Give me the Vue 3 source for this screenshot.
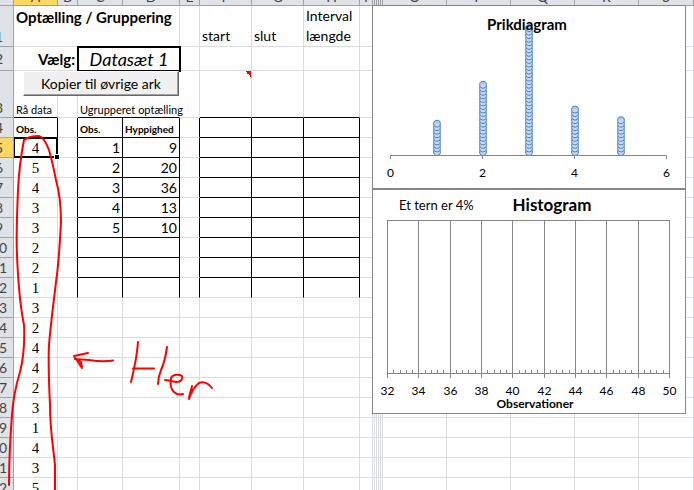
<script setup>
const observations = [4, 5, 4, 3, 3, 2, 2, 1, 3, 2, 4, 4, 2, 3, 1, 4, 3, 5]
const counts = [9, 20, 36, 13, 10]
const letters = 'ABCDEFGHIJKLMNOPQRS'.split('')
const narrow = 'JKLMN'.split('')
const tail = 'JKLMNOPQRS'.split('')

const rows = observations.map((obs, i) => ({
  n: i + 5,
  obs,
  value: i < counts.length ? i + 1 : '',
  count: i < counts.length ? counts[i] : '',
  framed: i < 8,
  ruled: i < 7,
}))

const dots = counts.flatMap((count, i) =>
  Array.from({ length: count }, (_, k) => ({ x: 65 + i * 46, y: 147 - k * 3.54 }))
)
const dotLabels = [0, 2, 4, 6].map((v) => ({ v, x: 18.5 + v * 46 }))
const bins = Array.from({ length: 10 }, (_, i) => ({
  v: 32 + i * 2,
  x: Math.round(15 + i * 31.33) + 0.5,
}))
const minor = Array.from({ length: 45 }, (_, i) => Math.round(15 + i * 6.266) + 0.5)
</script>

<template>
  <main class="window">
    <div class="sheet">
      <table class="grid">
        <colgroup>
          <col class="w-head" /><col class="w-a" /><col class="w-gap" /><col class="w-c" />
          <col class="w-d" /><col class="w-gap" /><col class="w-f" /><col class="w-f" />
          <col class="w-h" /><col class="w-i" />
          <col v-for="c in narrow" :key="c" class="w-narrow" />
          <col class="w-wide" /><col class="w-wide" /><col class="w-wide" /><col class="w-wide" /><col />
        </colgroup>
        <thead>
          <tr class="letters">
            <th></th>
            <th v-for="c in letters" :key="c" :class="{ current: c === 'A' }">
              <div class="letter">{{ narrow.includes(c) ? '' : c }}</div>
            </th>
          </tr>
        </thead>
        <tbody>
          <tr class="r1">
            <th class="low">1</th>
            <td colspan="4" class="title"><div class="spill">Optælling / Gruppering</div></td>
            <td></td>
            <td class="low label">start</td>
            <td class="low label">slut</td>
            <td class="low label tall">Interval længde</td>
            <td></td>
            <td v-for="c in tail" :key="c"></td>
          </tr>
          <tr class="r2">
            <th>2</th>
            <td colspan="2" class="choose">Vælg:</td>
            <td colspan="2" class="dataset">Datasæt 1</td>
            <td></td><td></td><td></td><td></td><td></td>
            <td v-for="c in tail" :key="c"></td>
          </tr>
          <tr class="r3">
            <th class="low">3</th>
            <td class="low small line-below">Rå data</td>
            <td></td>
            <td colspan="2" class="low small line-below open"><div class="spill">Ugrupperet optælling</div></td>
            <td></td>
            <td class="line-below note"></td>
            <td class="line-below"></td>
            <td class="line-below"></td>
            <td></td>
            <td v-for="c in tail" :key="c"></td>
          </tr>
          <tr>
            <th>4</th>
            <td class="caption line-below line-right">Obs.</td>
            <td class="line-right"></td>
            <td class="caption line-below line-right">Obs.</td>
            <td class="caption line-below line-right">Hyppighed</td>
            <td class="line-right"></td>
            <td v-for="k in 3" :key="k" class="line-below line-right"></td>
            <td></td>
            <td v-for="c in tail" :key="c"></td>
          </tr>
          <tr v-for="row in rows" :key="row.n">
            <th :class="{ current: row.n === 5 }">{{ row.n }}</th>
            <td class="obs" :class="{ selected: row.n === 5 }">{{ row.obs }}</td>
            <td :class="{ 'line-right': row.framed }"></td>
            <td class="num" :class="{ 'line-right': row.framed, 'line-below': row.ruled }">{{ row.value }}</td>
            <td class="num" :class="{ 'line-right': row.framed, 'line-below': row.ruled }">{{ row.count }}</td>
            <td :class="{ 'line-right': row.framed }"></td>
            <td v-for="k in 3" :key="k" :class="{ 'line-right': row.framed, 'line-below': row.ruled }"></td>
            <td></td>
            <td v-for="c in tail" :key="c"></td>
          </tr>
        </tbody>
      </table>

      <button type="button" class="copy">Kopier til øvrige ark</button>

      <div class="charts">
        <svg class="chart" width="314" height="184" viewBox="0 0 314 184" role="img" aria-label="Prikdiagram">
          <defs>
            <linearGradient id="dot" x1="0" y1="0" x2="0" y2="1">
              <stop offset="0" stop-color="#a3bde6" />
              <stop offset="1" stop-color="#d6e2f5" />
            </linearGradient>
          </defs>
          <rect x="0.5" y="0.5" width="313" height="183" class="frame" />
          <path d="M18.5 154V150.500H294.500V154M110.500 150V154M202.500 150V154" class="axis" />
          <circle v-for="(d, i) in dots" :key="i" :cx="d.x" :cy="d.y" r="3.500" class="dot" />
          <text x="155" y="25" class="t-mid">Prikdiagram</text>
          <text v-for="l in dotLabels" :key="l.v" :x="l.x" y="172" class="t-axis">{{ l.v }}</text>
        </svg>
        <svg class="chart" width="314" height="225" viewBox="0 0 314 225" role="img" aria-label="Histogram">
          <rect x="0.5" y="0.5" width="313" height="224" class="frame" />
          <text x="27" y="21" class="t-note">Et tern er 4%</text>
          <text x="180" y="22" class="t-big">Histogram</text>
          <path d="M15.500 31.500H297.500M15.500 184.500H297.500" class="axis" />
          <path v-for="b in bins" :key="b.v" :d="`M${b.x} 31V189`" class="axis" />
          <path v-for="m in minor" :key="m" :d="`M${m} 181V184`" class="axis" />
          <text v-for="b in bins" :key="b.v" :x="b.x" y="206" class="t-axis">{{ b.v }}</text>
          <text x="163" y="219" class="t-sub">Observationer</text>
        </svg>
      </div>

      <svg class="ink" width="240" height="490" viewBox="0 0 240 490" aria-hidden="true">
        <path d="M24 140C28 137 33 136 39 136C43 137 46 142 49 150C52 160 54 170 56 180C60 194 61 208 61 222C60 240 59 262 56 282C54 300 51 320 49 345C48 365 49 385 50 405C50 430 53 445 55 465V490" />
        <path d="M24 140C21 155 19 170 18 190C17 215 16 235 17 255C18 280 20 305 24 325C25 345 23 360 20 372C16 385 13 400 12 415C10 440 9 460 9 485" />
        <path d="M113 360.500C105 362 95 361 89 360L75 359M88 353L74 356L82 368L76 359L81 362L82 367" />
        <path d="M138 342C137 356 134 370 131 382M133 368.500H154M167 347C165 361 163 366 161 370C159 375 158 380 158 384" />
        <path d="M165 380C169 380 173 382 177 382C181 382 183 379 182 376C179 374 173 374 171 378C170 383 171 389 174 392C177 395 180 395 183 394" />
        <path d="M192 386C191 391 189 395 189 399C191 393 195 386 199 383C204 381 208 383 212 388" />
      </svg>
    </div>
  </main>
</template>

<style>
body {
  margin: 0;
  background: #fff;
}
</style>

<style scoped>
.window {
  height: 100vh;
  overflow: hidden;
  font-family: Lato, "Liberation Sans", sans-serif;
  color: #000;
}
.sheet {
  position: relative;
  margin-left: -15px;
}
.grid {
  width: 100%;
  table-layout: fixed;
  border-collapse: separate;
  border-spacing: 0;
}
.w-head { width: 29px; }
.w-a { width: 44px; }
.w-gap { width: 20px; }
.w-c { width: 45px; }
.w-d { width: 57px; }
.w-f { width: 52px; }
.w-h { width: 56px; }
.w-i { width: 13px; }
.w-narrow { width: 2px; }
.w-wide { width: 64px; }

tr { height: 20px; }
.letters { height: 6px; }
.r1 { height: 41px; }
.r2 { height: 24px; }
.r3 { height: 47px; }

th,
td {
  box-sizing: border-box;
  padding: 0;
  border-right: 1px solid #dadcdd;
  border-bottom: 1px solid #dadcdd;
  font-size: 14px;
  line-height: 18px;
  white-space: nowrap;
}
th {
  background: #dfe3e8;
  border-color: #9ea3aa;
  color: #444;
  font-size: 14px;
  font-weight: 400;
  text-align: center;
}
th.current {
  background: #ffd863;
  border-color: #c99d3c;
}
.letter {
  display: flex;
  align-items: flex-end;
  justify-content: center;
  height: 5px;
  line-height: 16px;
  overflow: hidden;
}
.low { vertical-align: bottom; }
.spill {
  width: 0;
  overflow: visible;
}
.title {
  padding-left: 2px;
  vertical-align: top;
  font-size: 15px;
  font-weight: 700;
  line-height: 22px;
}
.label {
  padding-left: 2px;
  line-height: 20px;
}
.tall { white-space: normal; }
.choose {
  border-right: 0;
  padding-right: 3px;
  font-size: 15px;
  font-weight: 700;
  text-align: right;
}
.dataset {
  position: relative;
  border: 0;
  outline: 2px solid #000;
  outline-offset: -1px;
  font-size: 18px;
  font-style: italic;
  line-height: 20px;
  text-align: center;
}
.small {
  padding-left: 2px;
  font-size: 11px;
  line-height: 15px;
}
.open { border-right-color: transparent; }
.note {
  background: linear-gradient(45deg, transparent 50%, #f00 50%) right top / 6px 6px no-repeat;
}
.caption {
  padding-left: 2px;
  font-size: 10px;
  font-weight: 700;
  vertical-align: bottom;
  line-height: 16px;
}
.line-right { border-right-color: #000; }
.line-below { border-bottom-color: #000; }
.num {
  padding-right: 2px;
  text-align: right;
}
.obs {
  font-family: "Liberation Serif", serif;
  font-size: 15px;
  text-align: center;
}
.selected {
  position: relative;
  border-color: #000;
  box-shadow: inset 1px 1px #000, inset -1px -1px #000;
}
.selected::after {
  content: "";
  position: absolute;
  right: -3px;
  bottom: -3px;
  width: 4px;
  height: 4px;
  background: #000;
  border: 1px solid #fff;
}
.copy {
  position: absolute;
  left: 38px;
  top: 71px;
  width: 156px;
  height: 25px;
  padding: 0;
  border: 1px solid;
  border-color: #fff #696969 #696969 #fff;
  background: #f0f0f0;
  box-shadow: inset -1px -1px #a0a0a0;
  color: #000;
  font-family: inherit;
  font-size: 14px;
}
.charts {
  position: absolute;
  left: 387px;
  top: 5px;
}
.chart { display: block; }
.frame {
  fill: #fff;
  stroke: #868686;
}
.axis {
  fill: none;
  stroke: #868686;
}
.dot {
  fill: url(#dot);
  stroke: #4f86c4;
}
.t-mid,
.t-big,
.t-sub,
.t-axis { text-anchor: middle; }
.t-mid {
  font-size: 15px;
  font-weight: 700;
}
.t-big {
  font-size: 17px;
  font-weight: 700;
}
.t-sub {
  font-size: 12px;
  font-weight: 700;
}
.t-axis { font-size: 12px; }
.t-note { font-size: 13px; }
.ink {
  position: absolute;
  left: 15px;
  top: 0;
  fill: none;
  stroke: #f00;
  stroke-width: 2;
  stroke-linecap: round;
  stroke-linejoin: round;
  pointer-events: none;
}
</style>
